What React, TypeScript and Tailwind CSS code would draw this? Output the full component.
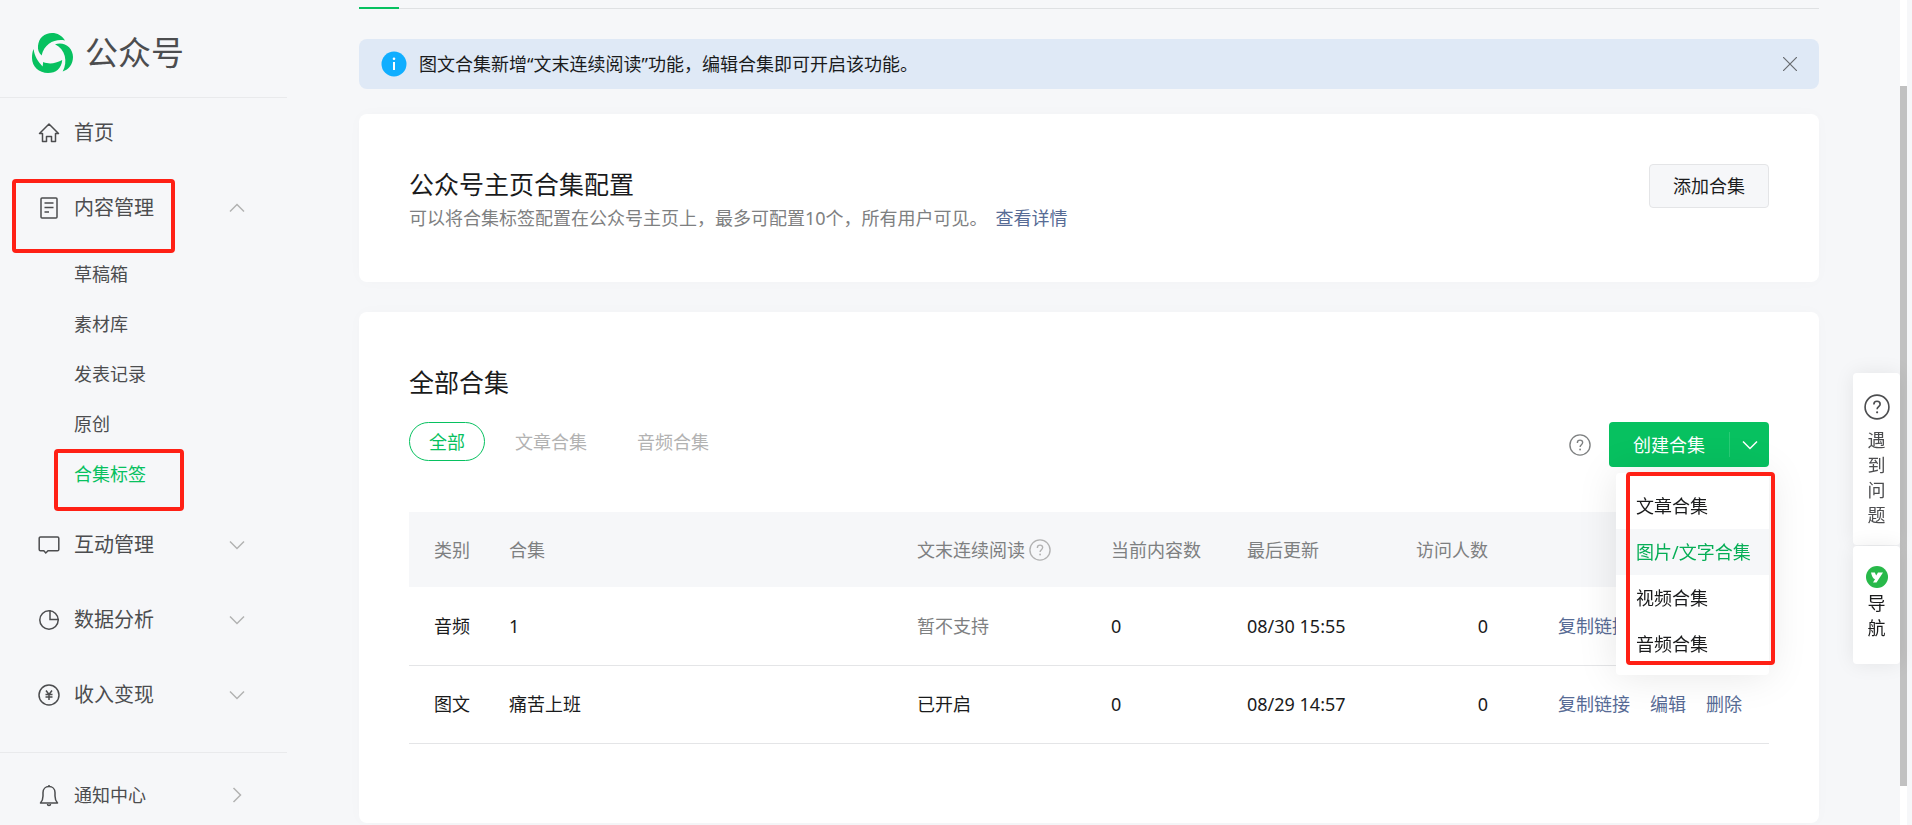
import React from 'react';

const menuItems = [
  { name: '文章合集', active: false },
  { name: '图片/文字合集', active: true },
  { name: '视频合集', active: false },
  { name: '音频合集', active: false },
];

const subItems = ['草稿箱', '素材库', '发表记录', '原创', '合集标签'];

const rows = [
  {
    type: '音频',
    title: '1',
    reading: '暂不支持',
    supported: false,
    count: 0,
    updated: '08/30 15:55',
    visitors: 0,
    actions: ['复制链接'],
  },
  {
    type: '图文',
    title: '痛苦上班',
    reading: '已开启',
    supported: true,
    count: 0,
    updated: '08/29 14:57',
    visitors: 0,
    actions: ['复制链接', '编辑', '删除'],
  },
];

function Icon({ className = 'size-6', children }: { className?: string; children: React.ReactNode }) {
  return (
    <svg
      viewBox="0 0 24 24"
      className={`shrink-0 ${className}`}
      fill="none"
      stroke="currentColor"
      strokeWidth="1.5"
      aria-hidden="true"
    >
      {children}
    </svg>
  );
}

function Chevron({ className }: { className: string }) {
  return (
    <svg viewBox="0 0 16 16" className={`size-4 ${className}`} fill="none" stroke="currentColor" strokeWidth="1.5" aria-hidden="true">
      <path d="M1 4.5 8 11.5 15 4.5" />
    </svg>
  );
}

function HelpIcon({ className }: { className: string }) {
  return (
    <Icon className={className}>
      <circle cx="12" cy="12" r="11" />
      <path d="M9.1 9.7c0-1.8 1.2-3 2.9-3s2.9 1.1 2.9 2.7c0 2.2-2.8 2.3-2.8 4.7" />
      <circle cx="12.1" cy="16.9" r="1" fill="currentColor" stroke="none" />
    </Icon>
  );
}

function Logo() {
  return (
    <svg viewBox="0 0 42 42" className="size-[42px] shrink-0" fill="#07c160" aria-hidden="true">
      <path d="M7 14C7.500 6 13.500 1 21 1c5.500 0 10 2.500 13 7.500C24.500 6.500 13.500 11 10.600 23.500 7.500 20.500 6.700 17.500 7 14Z" />
      <path d="M24 12.300C33 9 42 15.500 42 25c0 7-4.200 12.500-10.300 14.500C37 30 34.500 17 24 12.300Z" />
      <path d="M2.600 17C3.500 24.500 7 29.500 11.600 34.500l.6-4.500c6.500 2.600 12 1.400 19-2-.6 8.500-6.200 13-14.200 13C8 41 1 34.500 1 26c0-3.500.4-6.500 1.600-9Z" />
    </svg>
  );
}

function NavItem({ label, icon, chevron }: { label: string; icon: React.ReactNode; chevron?: string }) {
  return (
    <a href="#" className="flex h-[75px] items-center pr-[42px] pl-[37px] text-xl">
      {icon}
      <span className="ml-[13px] flex-1">{label}</span>
      {chevron && <Chevron className={`text-[#b2b2b2] ${chevron}`} />}
    </a>
  );
}

function Sidebar() {
  return (
    <aside className="w-[287px] shrink-0 text-[#4c4d4f]">
      <div className="flex h-[98px] items-center gap-3 border-b border-[#e9eaec] pt-2 pl-[31px]">
        <Logo />
        <span className="text-[33px] leading-10">公众号</span>
      </div>
      <nav className="relative -mt-[3px]">
        <NavItem
          label="首页"
          icon={
            <Icon>
              <path d="M2.500 12.500 12 3l9.500 9.500H18.500V20.500H14.500V15.500H9.500V20.500H5.500V12.500Z" strokeLinejoin="round" />
            </Icon>
          }
        />
        <NavItem
          label="内容管理"
          chevron="rotate-180"
          icon={
            <Icon>
              <rect x="4" y="2" width="16" height="20" rx="1" />
              <path d="M7.500 7h9M7.500 11.500h9M7.500 16h4.500" />
            </Icon>
          }
        />
        <ul className="mt-1 mb-2">
          {subItems.map((item) => (
            <li key={item}>
              <a
                href="#"
                className={`flex h-[50px] items-center pl-[74px] text-lg ${item === '合集标签' ? 'text-[#07c160]' : ''}`}
              >
                {item}
              </a>
            </li>
          ))}
        </ul>
        <NavItem
          label="互动管理"
          chevron="rotate-0"
          icon={
            <Icon>
              <path d="M3.500 4h17a1.300 1.300 0 0 1 1.300 1.300v11.200a1.300 1.300 0 0 1-1.300 1.300H11l-2.200 2.200-2-2.200H3.500a1.300 1.300 0 0 1-1.300-1.300V5.300A1.300 1.300 0 0 1 3.500 4Z" />
            </Icon>
          }
        />
        <NavItem
          label="数据分析"
          chevron="rotate-0"
          icon={
            <Icon>
              <circle cx="12" cy="12" r="9.200" />
              <path d="M13 2v9.500h9" />
            </Icon>
          }
        />
        <NavItem
          label="收入变现"
          chevron="rotate-0"
          icon={
            <Icon>
              <circle cx="12" cy="12" r="10" />
              <path d="m9 7.500 3 4 3-4M12 11.500V17M8.500 11.500h7M8.500 14h7" />
            </Icon>
          }
        />
        {/* annotation boxes */}
        <div className="absolute top-[84px] left-3 h-[74px] w-[163px] rounded-sm border-4 border-[#ff2015]" />
        <div className="absolute top-[354px] left-[54px] h-[62px] w-[130px] rounded-sm border-4 border-[#ff2015]" />
      </nav>
      <div className="mt-5 border-t border-[#e9eaec]">
        <a href="#" className="flex h-[83px] items-center pr-[42px] pl-[37px] text-lg">
          <Icon>
            <path d="M3.500 20h17c-1.800-2-2.500-4-2.500-7v-3.500c0-3.500-2.500-6-6-6s-6 2.500-6 6V13c0 3-.7 5-2.500 7Z" strokeLinejoin="round" />
            <path d="M12 3.500V2M10.500 21a1.500 1.500 0 0 0 3 0" />
          </Icon>
          <span className="ml-[13px] flex-1">通知中心</span>
          <Chevron className="-rotate-90 text-[#b2b2b2]" />
        </a>
      </div>
    </aside>
  );
}

function CreateButton() {
  return (
    <div className="relative">
      <div className="flex h-[45px] items-center rounded bg-[#07c160] text-lg text-white">
        <button type="button" className="h-full w-[120px]">
          创建合集
        </button>
        <button type="button" aria-label="展开" className="flex h-[25px] w-10 items-center justify-center border-l border-[#2acb76]">
          <Chevron className="text-white" />
        </button>
      </div>
      <div className="absolute top-[51px] right-0 z-10 h-[202px] w-[153px] rounded bg-white pt-[10px] shadow-[0_0_40px_rgba(0,0,0,0.1)]">
        {menuItems.map((item) => (
          <button
            key={item.name}
            type="button"
            className={`block h-[46px] w-full pl-5 text-left text-lg ${item.active ? 'bg-[#f6f7f9] text-[#06ae56]' : 'text-[#1a1b1c]'}`}
          >
            {item.name}
          </button>
        ))}
      </div>
      <div className="absolute top-[50px] -right-[6px] z-20 h-[193px] w-[149px] rounded-sm border-4 border-[#ff2015]" />
    </div>
  );
}

function CollectionTable() {
  return (
    <table className="mt-[45px] w-full table-fixed text-left text-lg">
      <colgroup>
        <col className="w-[100px]" />
        <col />
        <col className="w-[194px]" />
        <col className="w-[136px]" />
        <col className="w-[160px]" />
        <col className="w-[81px]" />
        <col className="w-[281px]" />
      </colgroup>
      <thead>
        <tr className="h-[75px] bg-[#f6f7f9] text-[#7e8081]">
          <th className="pl-[25px] font-normal">类别</th>
          <th className="font-normal">合集</th>
          <th className="font-normal">
            <span className="flex items-center gap-1 whitespace-nowrap">
              文末连续阅读
              <HelpIcon className="size-[22px] text-[#b2b2b2]" />
            </span>
          </th>
          <th className="font-normal">当前内容数</th>
          <th className="font-normal">最后更新</th>
          <th className="text-right font-normal whitespace-nowrap">访问人数</th>
          <th aria-label="操作" />
        </tr>
      </thead>
      <tbody>
        {rows.map((row) => (
          <tr key={row.title} className="h-[78px] border-b border-[#e4e5e7] text-[#1a1b1c]">
            <td className="pl-[25px]">{row.type}</td>
            <td>{row.title}</td>
            <td className={row.supported ? '' : 'text-[#7e8081]'}>{row.reading}</td>
            <td>{row.count}</td>
            <td>{row.updated}</td>
            <td className="text-right">{row.visitors}</td>
            <td>
              <div className="flex gap-5 pl-[70px] text-[#576b95]">
                {row.actions.map((action) => (
                  <a key={action} href="#">
                    {action}
                  </a>
                ))}
              </div>
            </td>
          </tr>
        ))}
      </tbody>
    </table>
  );
}

function FloatingHelp() {
  return (
    <div className="fixed top-[373px] right-3 flex w-[47px] flex-col gap-px text-lg leading-[25px] text-[#4c4d4f]">
      <a href="#" className="flex h-[172px] flex-col items-center rounded bg-white pt-[21px] shadow-[0_0_20px_rgba(0,0,0,0.08)]">
        <HelpIcon className="size-[26px]" />
        <span className="mt-2 w-[18px]">遇到问题</span>
      </a>
      <a href="#" className="flex h-[118px] flex-col items-center rounded bg-white pt-5 text-[#1a1b1c] shadow-[0_0_20px_rgba(0,0,0,0.08)]">
        <svg viewBox="0 0 22 22" className="size-[22px] shrink-0" aria-hidden="true">
          <circle cx="11" cy="11" r="11" fill="#28b94a" />
          <path d="M5 6.500h3.800l1.400 3 1.800-3H17L10.500 16.500H7l2-3.200C7 12.500 5.800 10 5 6.500Z" fill="#fff" />
        </svg>
        <span className="mt-[3px] w-[18px]">导航</span>
      </a>
    </div>
  );
}

export default function App() {
  return (
    <div className="flex h-screen overflow-hidden bg-[#f6f7f9] font-['Noto_Sans','Noto_Sans_CJK_SC',sans-serif]">
      <Sidebar />
      <main className="ml-[72px] min-w-0 flex-1">
        <div className="h-[9px] border-b border-[#dfe1e3]">
          <div className="h-[9px] w-10 border-b-2 border-[#07c160]" />
        </div>

        <div className="mt-[30px] flex h-[50px] items-center rounded-lg bg-[#dfe9f6] px-[22px] text-lg text-[#1a1b1c]">
          <svg viewBox="0 0 26 26" className="size-[26px] shrink-0" aria-hidden="true">
            <circle cx="13" cy="13" r="12.500" fill="#10aeff" />
            <path d="M13 11v8" stroke="#fff" strokeWidth="2" />
            <circle cx="13" cy="7.800" r="1.300" fill="#fff" />
          </svg>
          <p className="ml-3 flex-1">图文合集新增“文末连续阅读”功能，编辑合集即可开启该功能。</p>
          <button type="button" aria-label="关闭">
            <svg viewBox="0 0 14 14" className="size-[14px]" stroke="#686b70" strokeWidth="1.200" aria-hidden="true">
              <path d="m0 0 14 14M14 0 0 14" />
            </svg>
          </button>
        </div>

        <section className="mt-[25px] flex h-[168px] items-start justify-between rounded-lg bg-white px-[50px] pt-[50px] shadow-[0_0_16px_rgba(0,0,0,0.02)]">
          <div>
            <h2 className="text-[25px] leading-10 text-[#1a1b1c]">公众号主页合集配置</h2>
            <p className="text-lg leading-7 text-[#7e8081]">
              可以将合集标签配置在公众号主页上，最多可配置10个，所有用户可见。
              <a href="#" className="ml-2 text-[#576b95]">
                查看详情
              </a>
            </p>
          </div>
          <button type="button" className="h-11 w-[120px] rounded border border-[#e4e5e7] bg-[#f6f7f9] text-lg text-[#1a1b1c]">
            添加合集
          </button>
        </section>

        <section className="mt-[30px] h-[511px] rounded-lg bg-white px-[50px] pt-[50px] shadow-[0_0_16px_rgba(0,0,0,0.02)]">
          <h2 className="text-[25px] leading-10 text-[#1a1b1c]">全部合集</h2>
          <div className="mt-5 flex h-[45px] items-center justify-between">
            <div className="mb-[6px] flex text-lg text-[#b2b2b2]">
              <button type="button" className="h-[39px] rounded-[20px] border border-[#07c160] px-[19px] text-[#07c160]">
                全部
              </button>
              <button type="button" className="ml-[30px]">文章合集</button>
              <button type="button" className="ml-[50px]">音频合集</button>
            </div>
            <div className="flex items-center gap-[18px]">
              <HelpIcon className="size-[22px] text-[#7e8081]" />
              <CreateButton />
            </div>
          </div>
          <CollectionTable />
        </section>
      </main>

      {/* page scrollbar */}
      <div className="ml-[81px] w-3 shrink-0 bg-[#f6f7f9] pr-[5px]">
        <div className="h-full bg-white pt-[86px]">
          <div className="h-[700px] bg-[#c1c1c1]" />
        </div>
      </div>
      <FloatingHelp />
    </div>
  );
}
